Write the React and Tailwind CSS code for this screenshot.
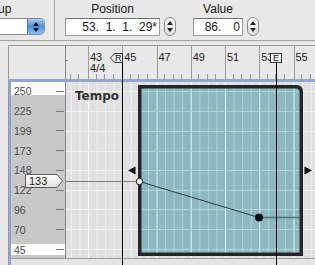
import React from "react";

function Stepper() {
  return (
    <div className="w-[12px] h-[19px] rounded-[6px] border border-[#8c8c8c] bg-gradient-to-b from-white to-[#dcdcdc] flex flex-col items-center justify-between py-[3px]">
      <svg width="6" height="4" viewBox="0 0 6 4">
        <path d="M3 0L6 4H0z" fill="#222" />
      </svg>
      <svg width="6" height="4" viewBox="0 0 6 4">
        <path d="M0 0H6L3 4z" fill="#222" />
      </svg>
    </div>
  );
}

function ScaleRow({ label }) {
  return (
    <div className="h-[12px] shrink-0 flex items-center justify-between pl-[3px] pr-[1px]">
      <span className="text-[10.5px] leading-[12px] text-[#4a4a4a]">{label}</span>
      <div className="w-[8px] h-px bg-[#7a7a7a]" />
    </div>
  );
}

function LaneGrid() {
  const vx = [];
  for (let k = -3; k <= 27; k++) vx.push({ x: 22.5 + 8.5625 * k, major: k % 4 === 0 });
  const hy = [9, 29, 49, 69, 88, 108, 127, 147, 167];
  const region = "M72 3 H231 Q237 3 237 9 V174 H72 Z";
  const border = "M73.75 4.75 H230 Q235.25 4.75 235.25 10 V172.25 H73.75 Z";

  return (
    <svg width="249" height="176" viewBox="0 0 249 176" className="absolute inset-0">
      <defs>
        <clipPath id="teal">
          <path d={region} />
        </clipPath>
      </defs>
      {vx.map((v, i) => (
        <line key={"g" + i} x1={v.x} x2={v.x} y1="0" y2="176" stroke={v.major ? "#fcfcfc" : "#f0f0f0"} />
      ))}
      {hy.map((y) => (
        <line key={"h" + y} x1="0" x2="249" y1={y + 0.5} y2={y + 0.5} stroke="#f2f2f2" />
      ))}
      <path d={region} fill="#8db8c0" />
      <g clipPath="url(#teal)">
        {vx.map((v, i) => (
          <line key={"t" + i} x1={v.x} x2={v.x} y1="0" y2="176" stroke={v.major ? "#d6f4fa" : "#acd0d7"} />
        ))}
        {hy.map((y) => (
          <line key={"th" + y} x1="0" x2="249" y1={y + 0.5} y2={y + 0.5} stroke="#b0d3d9" />
        ))}
      </g>
      <path d={border} fill="none" stroke="#262626" strokeWidth="3.5" />

      {/* 133 guide and curve */}
      <line x1="0" x2="73" y1="99.5" y2="99.5" stroke="#7c7c7c" />
      <line x1="73.5" y1="99.5" x2="193" y2="135.5" stroke="#2d3d42" />
      <line x1="193" y1="135.5" x2="234" y2="135.5" stroke="#56706f" strokeWidth="1.3" />
      <circle cx="73.5" cy="99.5" r="3.2" fill="#fff" stroke="#111" />
      <circle cx="193" cy="135.5" r="4" fill="#111" />

      {/* scroll arrows */}
      <path d="M62 88.5 L69.5 84.5 V92.5 Z" fill="#111" />
      <path d="M246 88.5 L238.5 84.5 V92.5 Z" fill="#111" />
    </svg>
  );
}

export default function App() {
  const bars = [
    { n: "41" },
    { n: "43", sig: "4/4" },
    { n: "45" },
    { n: "47" },
    { n: "49" },
    { n: "51" },
    { n: "53" },
    { n: "55" },
  ];

  return (
    <div className="relative w-[315px] h-[265px] overflow-hidden flex flex-col bg-[#e8e8e8] text-[#1a1a1a] font-['Liberation_Sans',Arial,sans-serif]">
      {/* Toolbar */}
      <div className="h-[41px] shrink-0 flex border-b border-[#a3a3a3]">
        <div className="w-[55px] shrink-0 border-r border-[#a3a3a3] overflow-hidden flex flex-col">
          <div className="-ml-[22px] pt-[2px] text-[12px] leading-[14px] whitespace-nowrap">Group</div>
          <div className="mt-[2px] w-[45px] h-[17px] flex bg-white border border-l-0 border-[#8a8a8a] rounded-r-[5px] overflow-hidden">
            <div className="flex-1" />
            <div className="w-[17px] border-l border-[#5877a8] bg-gradient-to-b from-[#a9cbf5] via-[#4f8ce0] to-[#8dbcf2] flex flex-col items-center justify-center gap-[2px]">
              <svg width="6" height="4" viewBox="0 0 6 4">
                <path d="M3 0L6 4H0z" fill="#111" />
              </svg>
              <svg width="6" height="4" viewBox="0 0 6 4">
                <path d="M0 0H6L3 4z" fill="#111" />
              </svg>
            </div>
          </div>
        </div>

        <div className="ml-[10px] flex flex-col">
          <div className="w-[95px] text-center pt-[2px] text-[12px] leading-[14px]">Position</div>
          <div className="mt-[2px] flex items-start gap-[4px]">
            <div className="w-[95px] h-[18px] bg-white border border-[#9c9c9c] border-t-[#6e6e6e] text-right pr-[2px] text-[12px] leading-[17px] whitespace-pre">
              53.  1.  1.  29*
            </div>
            <div className="-mt-[1px]">
              <Stepper />
            </div>
          </div>
        </div>

        <div className="ml-[17px] flex flex-col">
          <div className="w-[50px] text-center pt-[2px] text-[12px] leading-[14px]">Value</div>
          <div className="mt-[2px] flex items-start gap-[4px]">
            <div className="w-[50px] h-[18px] bg-white border border-[#9c9c9c] border-t-[#6e6e6e] flex justify-end pr-[2px] text-[12px] leading-[17px]">
              <span>86.</span>
              <span className="ml-[12px]">0</span>
            </div>
            <div className="-mt-[1px]">
              <Stepper />
            </div>
          </div>
        </div>
      </div>

      {/* Main */}
      <div className="flex-1 min-h-0 pl-[8px] pt-[4px] flex flex-col">
        <div className="flex-1 min-h-0 border-l border-t border-[#9a9a9a] flex flex-col">
          {/* Ruler row */}
          <div className="h-[33px] shrink-0 flex">
            <div className="w-[56px] shrink-0" />
            <div className="flex-1 min-w-0 border-l border-[#8a8a8a] overflow-hidden">
              <div className="-ml-[12.25px] h-full flex text-[#222]">
                {bars.map((b) => (
                  <div key={b.n} className="w-[34.25px] shrink-0 h-full border-l border-[#9c9c9c] flex flex-col">
                    <div className="pl-[1px] pt-[6px] text-[11px] leading-[11px]">{b.n}</div>
                    {b.sig && <div className="pl-[1px] text-[11px] leading-[10px]">{b.sig}</div>}
                    <div className="mt-auto h-[5px] flex pl-[6.56px] gap-[7.56px]">
                      <div className="w-px h-full bg-[#9c9c9c]" />
                      <div className="w-px h-full bg-[#9c9c9c]" />
                      <div className="w-px h-full bg-[#9c9c9c]" />
                    </div>
                  </div>
                ))}
              </div>
            </div>
          </div>

          {/* Selected track */}
          <div className="flex-1 min-h-0 border-l-[2px] border-t-[3px] border-[#8ea8d0] flex flex-col">
            <div className="relative h-[177px] shrink-0 flex border-b border-[#9a9a9a]">
              <div className="w-[55px] shrink-0 bg-[#c8c8c8] border-r border-[#8a8a8a] flex flex-col">
                <div className="h-[13px] shrink-0 bg-white pt-[3px]">
                  <ScaleRow label="250" />
                </div>
                <div className="mt-[10px] flex flex-col gap-[7.75px]">
                  {["225", "199", "173", "148", "122", "96", "70"].map((l) => (
                    <ScaleRow key={l} label={l} />
                  ))}
                </div>
                <div className="mt-[8.5px] h-[11px] shrink-0 bg-white flex flex-col justify-center">
                  <ScaleRow label="45" />
                </div>
              </div>

              <div className="relative flex-1 min-w-0 bg-[#e0e0e0] overflow-hidden">
                <LaneGrid />
                <div className="absolute left-[9px] top-[7px] text-[12px] leading-[14px] font-bold text-[#333] font-['DejaVu_Sans',sans-serif]">
                  Tempo
                </div>
              </div>

              {/* current value tag */}
              <div className="absolute left-[14px] top-[92px] w-[38px] h-[14px]">
                <svg width="38" height="14" viewBox="0 0 38 14" className="absolute inset-0">
                  <defs>
                    <linearGradient id="tag" x1="0" y1="0" x2="0" y2="1">
                      <stop offset="0" stopColor="#ffffff" />
                      <stop offset="1" stopColor="#e2e2e2" />
                    </linearGradient>
                  </defs>
                  <path d="M0.5 0.5 H32 L37.5 7 L32 13.5 H0.5 Z" fill="url(#tag)" stroke="#5a5a5a" />
                </svg>
                <span className="absolute left-[4px] top-0 text-[11px] leading-[14px] text-[#222]">133</span>
              </div>
            </div>
            <div className="flex-1 bg-[#e4e4e4]" />
          </div>
        </div>
      </div>

      {/* Locator markers and lines */}
      <div className="absolute left-[122px] top-[53px] bottom-0 w-px bg-black" />
      <div className="absolute left-[276px] top-[62px] bottom-0 w-px bg-black" />
      <div className="absolute left-[110px] top-[53px] w-[13px] h-[10px]">
        <svg width="13" height="10" viewBox="0 0 13 10" className="absolute inset-0">
          <path d="M0.5 5 L4.5 0.5 H12.5 V9.5 H4.5 Z" fill="#f2f2f2" stroke="#333" />
        </svg>
        <span className="absolute left-[5px] top-0 text-[9px] leading-[10px] text-[#111]">R</span>
      </div>
      <div className="absolute left-[270px] top-[53px] w-[12px] h-[10px] border border-[#333] bg-[#f4f4f4] flex items-center justify-center text-[9px] leading-[8px] text-[#111]">
        E
      </div>
    </div>
  );
}
